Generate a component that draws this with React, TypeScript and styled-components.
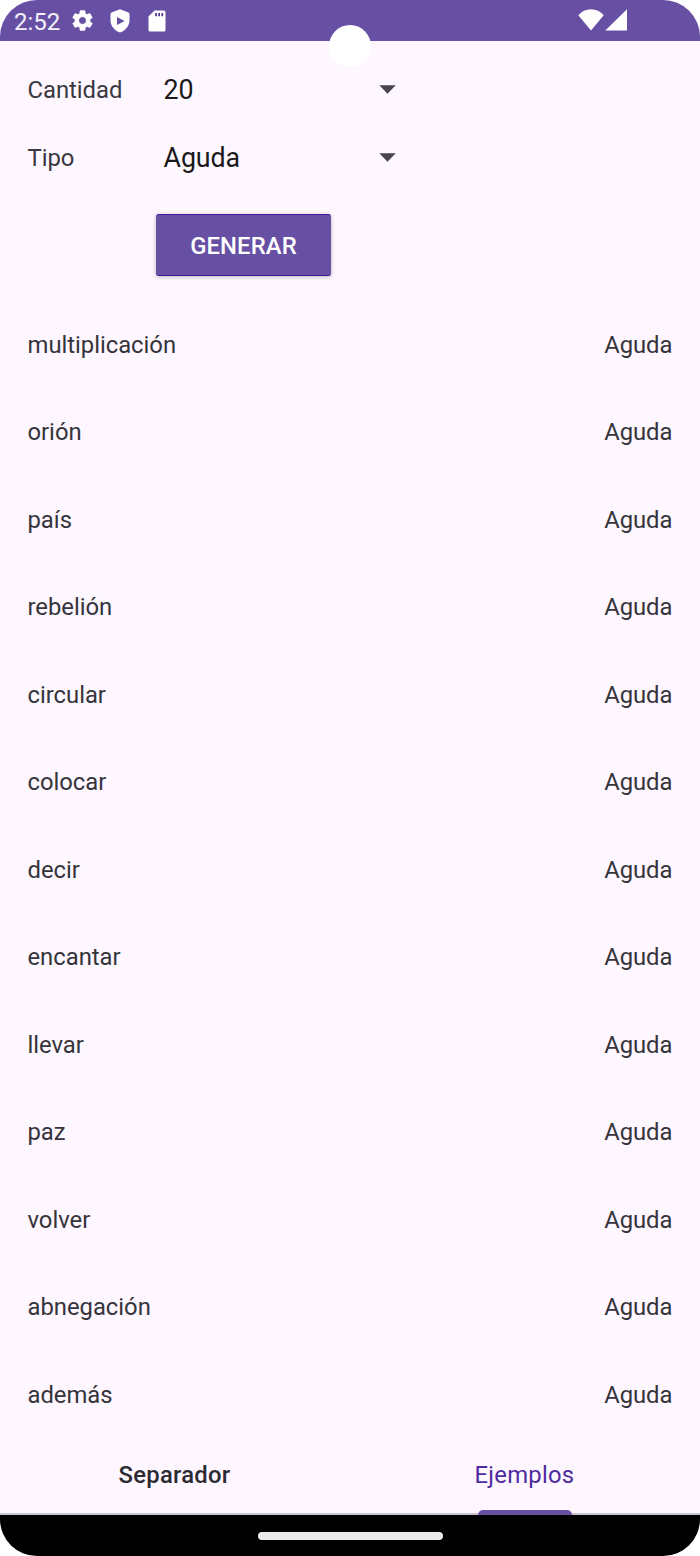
import React from "react";
import styled, { createGlobalStyle } from "styled-components";

const GlobalStyle = createGlobalStyle`
  * { box-sizing: border-box; }
  body { margin: 0; background: #fff; }
`;

const Screen = styled.div`
  position: relative;
  display: flex;
  flex-direction: column;
  width: 700px;
  height: 1556px;
  overflow: hidden;
  border-radius: 37px;
  background: #fef7ff;
  color: #1d1b20;
  font-family: Roboto, "Liberation Sans", sans-serif;
  font-size: 23.84px;
  font-weight: 400;
  letter-spacing: -0.02px;
`;

const StatusBar = styled.header`
  display: flex;
  align-items: center;
  flex: none;
  height: 41px;
  padding: 0 73px 0 14px;
  background: #6750a3;
  color: #fff;
`;

const Clock = styled.time`
  width: 56px;
  padding-top: 2px;
  font-size: 24px;
  line-height: 28px;
  color: #f3f0f9;
`;

const StatusIcons = styled.div<{ $gap: number }>`
  display: flex;
  align-items: center;
  gap: ${(p) => p.$gap}px;
  svg { display: block; }
`;

const SystemIcons = styled(StatusIcons)`
  margin-top: -2px;
`;

const NotificationIcons = styled(StatusIcons)`
  svg:last-child { margin-left: 2.5px; }
`;

const Spacer = styled.div`
  flex: 1;
`;

const CameraHole = styled.div`
  position: absolute;
  top: 25px;
  left: 329px;
  width: 42px;
  height: 42px;
  border-radius: 50%;
  background: #fff;
`;

const Form = styled.section`
  flex: none;
  height: 259.8px;
  padding: 15px 28px 0 27.5px;
`;

const Field = styled.div`
  display: flex;
  align-items: center;
  height: 68px;
`;

const FieldLabel = styled.label`
  width: 136px;
  color: #3a3840;
`;

const Select = styled.div`
  display: flex;
  align-items: center;
  justify-content: space-between;
  width: 232px;
  color: #1a1a1a;
  font-size: 26.8px;
  letter-spacing: -0.1px;
  svg { display: block; margin-top: -2px; }
`;

const GenerateButton = styled.button`
  display: block;
  width: 175px;
  height: 62px;
  margin: 22px 0 0 128.5px;
  padding: 2px 0 0;
  border: 1px solid #3f1a9b;
  border-width: 1px 0;
  border-radius: 3px;
  background: #6750a3;
  box-shadow: 0 1px 4px rgba(0, 0, 0, 0.28);
  color: #fff;
  font: 500 23.84px Roboto, "Liberation Sans", sans-serif;
  letter-spacing: 0.1px;
`;

const WordList = styled.ul`
  flex: none;
  margin: 0;
  padding: 0 27.5px;
  list-style: none;
`;

const WordRow = styled.li`
  display: flex;
  align-items: center;
  justify-content: space-between;
  height: 87.54px;
  color: #36343b;
`;

const Tabs = styled.nav`
  display: flex;
  flex: 1;
  border-bottom: 2px solid #cac4d0;
`;

const Tab = styled.div<{ $active?: boolean }>`
  position: relative;
  display: flex;
  flex: 1;
  align-items: center;
  justify-content: center;
  padding: 0 1px 1px 0;
  color: ${(p) => (p.$active ? "#4f2ba0" : "#2c2a32")};
  font-weight: ${(p) => (p.$active ? 400 : 500)};
  letter-spacing: 0.25px;
`;

const Indicator = styled.span`
  position: absolute;
  bottom: -2px;
  left: 50%;
  width: 94px;
  height: 5px;
  margin-left: -47px;
  border-radius: 5px 5px 0 0;
  background: #6750a3;
`;

const NavigationBar = styled.footer`
  display: flex;
  align-items: center;
  justify-content: center;
  flex: none;
  height: 41px;
  background: #000;
`;

const HomeHandle = styled.div`
  width: 185px;
  height: 8px;
  border-radius: 4px;
  background: #ebebeb;
`;

const GearIcon = () => (
  <svg width="25" height="25" viewBox="0 0 24 24" fill="#fff" stroke="#fff" strokeWidth=".5">
    <path d="M19.14 12.94c.04-.3.06-.61.06-.94s-.02-.64-.07-.94l2.03-1.58c.18-.14.23-.41.12-.61l-1.92-3.32c-.12-.22-.37-.29-.59-.22l-2.39.96c-.5-.38-1.03-.7-1.62-.94l-.36-2.54a.484.484 0 0 0-.48-.41h-3.84c-.24 0-.43.17-.47.41l-.36 2.54c-.59.24-1.13.57-1.62.94l-2.39-.96c-.22-.08-.47 0-.59.22L2.74 8.87c-.12.21-.08.47.12.61l2.03 1.58c-.05.3-.09.63-.09.94s.02.64.07.94l-2.03 1.58c-.18.14-.23.41-.12.61l1.92 3.32c.12.22.37.29.59.22l2.39-.96c.5.38 1.03.7 1.62.94l.36 2.54c.05.24.24.41.48.41h3.84c.24 0 .44-.17.47-.41l.36-2.54c.59-.24 1.13-.56 1.62-.94l2.39.96c.22.08.47 0 .59-.22l1.92-3.32c.12-.22.07-.47-.12-.61l-2.01-1.58zM12 15.6c-1.98 0-3.6-1.62-3.6-3.6s1.62-3.6 3.6-3.6 3.6 1.62 3.6 3.6-1.62 3.6-3.6 3.6z" />
  </svg>
);

const ShieldIcon = () => (
  <svg width="20" height="24" viewBox="0 0 20 24" fill="#fff" fillRule="evenodd">
    <path d="M10 .3 1.5 3.5Q.5 4 .5 5v6.3C.5 17 4.6 21.8 10 23.6c5.4-1.8 9.5-6.6 9.5-12.3V5q0-1-1-1.5ZM7 8l7.6 4L7 16Z" />
  </svg>
);

const SdCardIcon = () => (
  <svg width="18" height="22" viewBox="0 0 18 22">
    <path fill="#fff" d="M6.5.5H16q1.5 0 1.5 1.5v18q0 1.5-1.5 1.5H2Q.5 21.5.5 20V6.5Z" />
    <path fill="#4f319b" d="M7.2 3h1.7v3.3H7.2ZM10.3 3H12v3.3h-1.7ZM13.4 3h1.7v3.3h-1.7Z" />
  </svg>
);

const WifiIcon = () => (
  <svg width="26" height="22" viewBox="0 0 26 22" fill="#fff">
    <path d="M.3 6.3C3.5 2.3 8 .3 13 .3s9.5 2 12.7 6L13 21.5Z" />
  </svg>
);

const SignalIcon = () => (
  <svg width="22" height="22" viewBox="0 0 22 22" fill="#fff">
    <path d="M22 .3V21.5H.3Z" />
  </svg>
);

const CaretIcon = () => (
  <svg width="17" height="9" viewBox="0 0 17 9" fill="#49454f">
    <path d="M.3.3h16.4L8.5 8.7Z" />
  </svg>
);

const words = [
  "multiplicación", "orión", "país", "rebelión", "circular", "colocar", "decir",
  "encantar", "llevar", "paz", "volver", "abnegación", "además",
];

export default function App() {
  return (
    <>
      <GlobalStyle />
      <Screen>
        <StatusBar>
          <Clock>2:52</Clock>
          <NotificationIcons $gap={15}>
            <GearIcon />
            <ShieldIcon />
            <SdCardIcon />
          </NotificationIcons>
          <Spacer />
          <SystemIcons $gap={1.5}>
            <WifiIcon />
            <SignalIcon />
          </SystemIcons>
        </StatusBar>
        <CameraHole />
        <Form>
          <Field>
            <FieldLabel>Cantidad</FieldLabel>
            <Select><span>20</span><CaretIcon /></Select>
          </Field>
          <Field>
            <FieldLabel>Tipo</FieldLabel>
            <Select><span>Aguda</span><CaretIcon /></Select>
          </Field>
          <GenerateButton>GENERAR</GenerateButton>
        </Form>
        <WordList>
          {words.map((word) => (
            <WordRow key={word}>
              <span>{word}</span>
              <span>Aguda</span>
            </WordRow>
          ))}
        </WordList>
        <Tabs>
          <Tab>Separador</Tab>
          <Tab $active>
            Ejemplos
            <Indicator />
          </Tab>
        </Tabs>
        <NavigationBar>
          <HomeHandle />
        </NavigationBar>
      </Screen>
    </>
  );
}
